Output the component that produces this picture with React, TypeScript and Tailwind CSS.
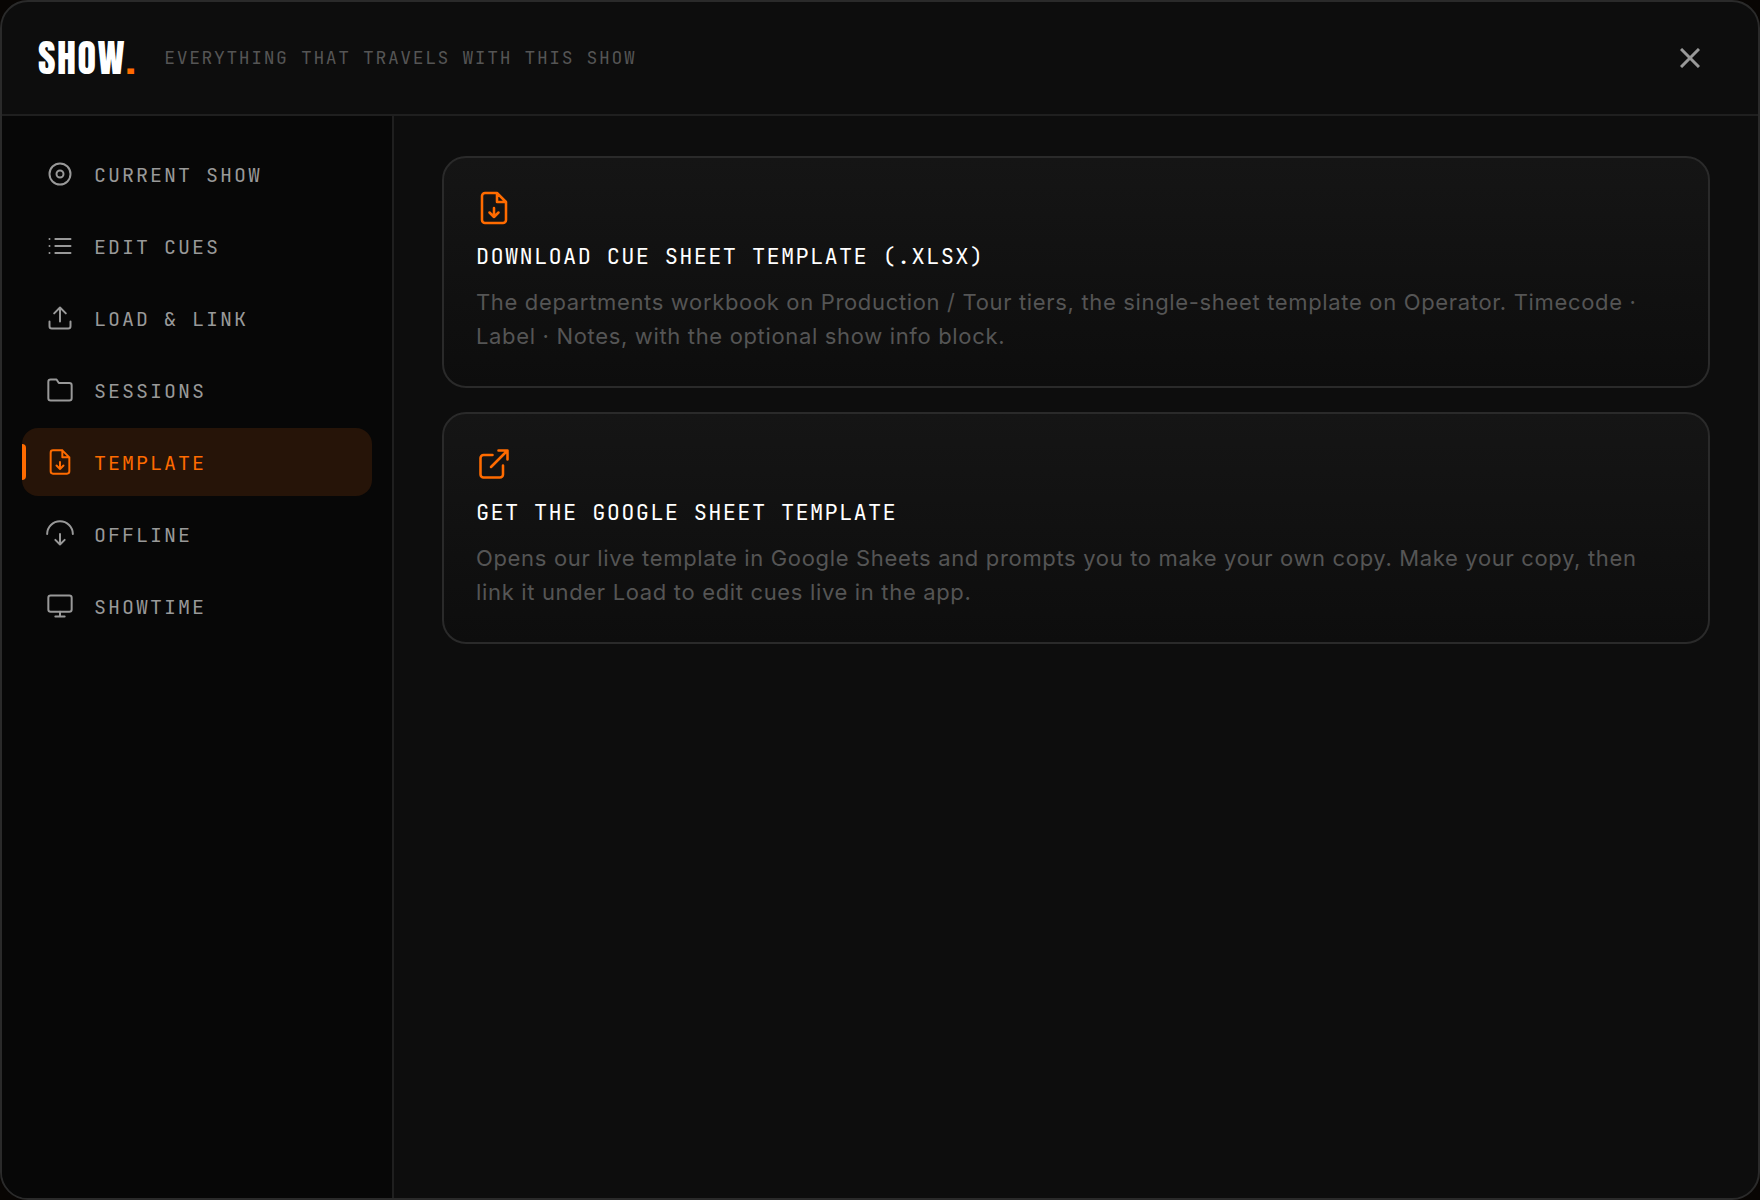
import { useState } from 'react'
import type { ReactNode } from 'react'

type IconProps = { className?: string }

function Icon({ className, children }: IconProps & { children: ReactNode }) {
  return (
    <svg
      viewBox="0 0 24 24"
      fill="none"
      stroke="currentColor"
      strokeWidth={1.7}
      strokeLinecap="round"
      strokeLinejoin="round"
      aria-hidden="true"
      className={className}
    >
      {children}
    </svg>
  )
}

const DiscIcon = ({ className }: IconProps) => (
  <Icon className={className}>
    <circle cx="12" cy="12" r="9" />
    <circle cx="12" cy="12" r="3" />
  </Icon>
)

const ListIcon = ({ className }: IconProps) => (
  <Icon className={className}>
    <path d="M8 6h13M8 12h13M8 18h13M3 6h.01M3 12h.01M3 18h.01" />
  </Icon>
)

const UploadIcon = ({ className }: IconProps) => (
  <Icon className={className}>
    <path d="M12 15V3M7 8l5-5 5 5M3 15v4a2 2 0 0 0 2 2h14a2 2 0 0 0 2-2v-4" />
  </Icon>
)

const FolderIcon = ({ className }: IconProps) => (
  <Icon className={className}>
    <path d="M22 19a2 2 0 0 1-2 2H4a2 2 0 0 1-2-2V5a2 2 0 0 1 2-2h5l2 3h9a2 2 0 0 1 2 2z" />
  </Icon>
)

const FileDownIcon = ({ className }: IconProps) => (
  <Icon className={className}>
    <path d="M14 2H6a2 2 0 0 0-2 2v16a2 2 0 0 0 2 2h12a2 2 0 0 0 2-2V8zM14 2v6h6M12 12v6M9 15l3 3 3-3" />
  </Icon>
)

const OfflineIcon = ({ className }: IconProps) => (
  <Icon className={className}>
    <path d="M1 12a11 11 0 0 1 22 0M12 12v9M8 17l4 4 4-4" />
  </Icon>
)

const MonitorIcon = ({ className }: IconProps) => (
  <Icon className={className}>
    <rect x="2" y="3" width="20" height="14" rx="2" />
    <path d="M8 21h8M12 17v4" />
  </Icon>
)

const ExternalIcon = ({ className }: IconProps) => (
  <Icon className={className}>
    <path d="M18 13v6a2 2 0 0 1-2 2H5a2 2 0 0 1-2-2V8a2 2 0 0 1 2-2h6M15 3h6v6M10 14L21 3" />
  </Icon>
)

const NAV_ITEMS = [
  { id: 'current', label: 'Current Show', icon: DiscIcon },
  { id: 'cues', label: 'Edit Cues', icon: ListIcon },
  { id: 'load', label: 'Load & Link', icon: UploadIcon },
  { id: 'sessions', label: 'Sessions', icon: FolderIcon },
  { id: 'template', label: 'Template', icon: FileDownIcon },
  { id: 'offline', label: 'Offline', icon: OfflineIcon },
  { id: 'showtime', label: 'Showtime', icon: MonitorIcon },
]

const CARDS = [
  {
    icon: FileDownIcon,
    title: 'Download cue sheet template (.xlsx)',
    text: 'The departments workbook on Production / Tour tiers, the single-sheet template on Operator. Timecode · Label · Notes, with the optional show info block.',
  },
  {
    icon: ExternalIcon,
    title: 'Get the Google Sheet template',
    text: 'Opens our live template in Google Sheets and prompts you to make your own copy. Make your copy, then link it under Load to edit cues live in the app.',
  },
]

export default function App() {
  const [active, setActive] = useState('template')

  return (
    <div className="min-h-screen bg-[#080503] flex font-['Inter',sans-serif]">
      <div className="flex flex-1 flex-col overflow-hidden rounded-[28px] border-2 border-[#2a2a2a] bg-[#0d0d0d]">
        <header className="flex items-center border-b-2 border-[#1f1f1f] py-7 pr-10 pl-9">
          <h1 className="font-['Anton','Liberation_Sans_Narrow',sans-serif] text-[38px] leading-14 font-normal tracking-[0.04em] text-white">
            SHOW<span className="text-[#ff6b00]">.</span>
          </h1>
          <p className="ml-7 flex-1 font-['JetBrains_Mono','DejaVu_Sans_Mono',monospace] text-lg tracking-[0.09em] text-[#555] uppercase">
            Everything that travels with this show
          </p>
          <button
            type="button"
            aria-label="Close"
            className="flex size-14 items-center justify-center text-[#999] hover:text-white"
          >
            <svg viewBox="0 0 20 20" stroke="currentColor" strokeWidth="3" className="size-5" aria-hidden="true">
              <path d="M1 1l18 18M19 1L1 19" />
            </svg>
          </button>
        </header>

        <div className="flex flex-1">
          <nav className="flex w-[392px] shrink-0 flex-col gap-1 border-r-2 border-[#1f1f1f] bg-[#070707] px-5 py-6">
            {NAV_ITEMS.map(item => {
              const selected = item.id === active

              return (
                <button
                  key={item.id}
                  type="button"
                  aria-current={selected ? 'page' : undefined}
                  onClick={() => setActive(item.id)}
                  className={[
                    "relative flex h-17 items-center gap-5 rounded-2xl px-6 font-['JetBrains_Mono','DejaVu_Sans_Mono',monospace] text-xl tracking-widest uppercase",
                    selected ? 'bg-[#261408] text-[#ff6b00]' : 'text-[#999] hover:text-white',
                  ].join(' ')}
                >
                  {selected && <span className="absolute left-0 h-9 w-1 rounded-r-sm bg-[#ff6b00]" />}
                  <item.icon className="size-7" />
                  <span className="pt-0.5">{item.label}</span>
                </button>
              )
            })}
          </nav>

          <main className="flex flex-1 flex-col gap-6 px-12 py-10">
            {CARDS.map(card => (
              <button
                key={card.title}
                type="button"
                className="flex flex-col items-start rounded-3xl border-2 border-[#2a2a2a] bg-linear-to-b from-[#151515] to-[#0d0d0d] p-8 pb-[33px] text-left"
              >
                <card.icon className="size-9 text-[#ff6b00]" />
                <span className="mt-4 font-['JetBrains_Mono','DejaVu_Sans_Mono',monospace] text-[22px] leading-[30px] tracking-[0.06em] text-white uppercase">
                  {card.title}
                </span>
                <span className="mt-[13px] text-[22px] leading-[34px] tracking-[0.03em] text-[#555]">{card.text}</span>
              </button>
            ))}
          </main>
        </div>
      </div>
    </div>
  )
}
